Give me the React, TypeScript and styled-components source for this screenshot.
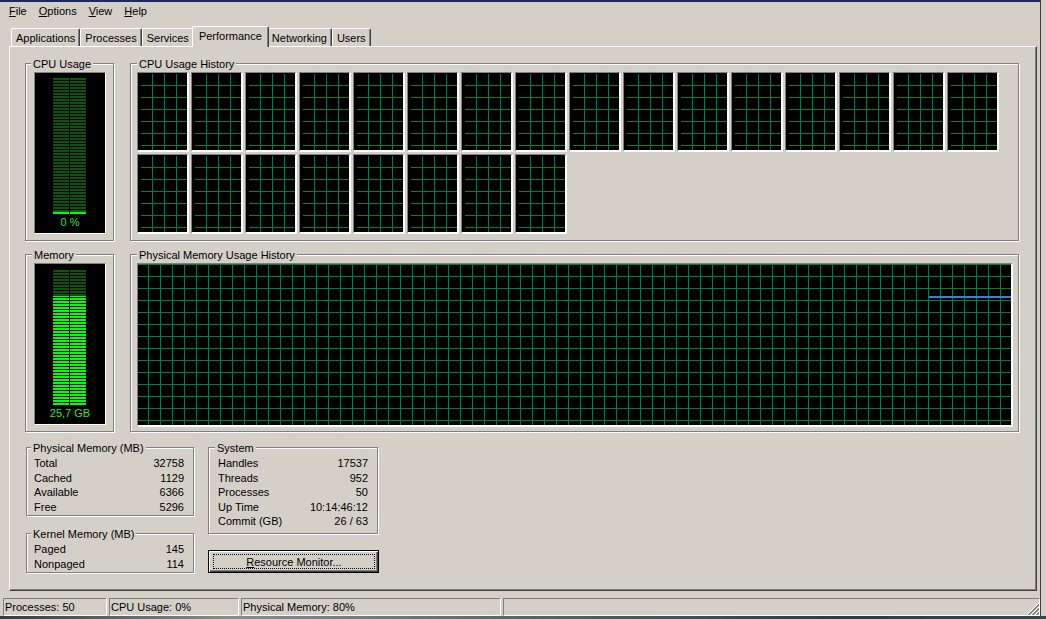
import React from "react";
import styled, {createGlobalStyle} from "styled-components";

const GlobalStyle = createGlobalStyle`
    html, body {
        margin: 0;
        padding: 0;
    }
    body {
        background: #d4d0c8;
        color: #000;
        font-family: "Liberation Sans", Arial, sans-serif;
        font-size: 11px;
        overflow: hidden;
    }
`;

const Screen = styled.div`
    display: flex;
    flex-direction: column;
    height: 619px;
    width: 1046px;
`;

const Window = styled.div`
    background: #d4d0c8;
    border-right: 1px solid #404040;
    box-sizing: border-box;
    display: flex;
    flex-direction: column;
    height: 616px;
    width: 1041px;
`;

const BottomEdge = styled.div`
    background: linear-gradient(90deg, #3a3a3a 0%, #8c8c8c 22%, #5a6464 50%, #2e3c3e 80%, #3a4446 100%);
    height: 3px;
`;

const TitleEdge = styled.div`
    background: #1b2a5e;
    height: 2px;
`;

const MenuBar = styled.div`
    align-items: center;
    display: flex;
    height: 18px;
    padding-left: 3px;
`;

const MenuItem = styled.span`
    line-height: 18px;
    padding: 0 6px;
`;

const TabStrip = styled.div`
    align-items: flex-end;
    display: flex;
    height: 26px;
    padding-left: 11px;
`;

const Tab = styled.div<{$active?: boolean}>`
    background: #d4d0c8;
    border: 1px solid #fff;
    border-bottom: none;
    border-radius: 2px 2px 0 0;
    border-right-color: #404040;
    box-shadow: inset -1px 0 0 #808080;
    box-sizing: border-box;
    height: ${(p) => (p.$active ? 21 : 18)}px;
    line-height: ${(p) => (p.$active ? 19 : 18)}px;
    margin: 0 ${(p) => (p.$active ? -2 : 0)}px ${(p) => (p.$active ? -1 : 0)}px;
    padding: 0 ${(p) => (p.$active ? 6 : 4)}px;
    position: relative;
    white-space: nowrap;
    z-index: ${(p) => (p.$active ? 1 : 0)};
`;

const Panel = styled.div`
    border: 1px solid #fff;
    border-bottom-color: #404040;
    border-right-color: #404040;
    box-shadow: inset -1px -1px 0 #808080;
    box-sizing: border-box;
    display: flex;
    flex-direction: column;
    height: 545px;
    margin-left: 9px;
    padding: 16px 17px 0 15px;
    width: 1028px;
`;

const Row = styled.div<{$top?: number}>`
    display: flex;
    gap: 16px;
    margin-top: ${(p) => p.$top || 0}px;
`;

const Group = styled.div<{$w?: number; $h: number; $pad: string; $top?: number}>`
    border: 1px solid #808080;
    box-shadow: inset 1px 1px 0 #fff, 1px 1px 0 #fff;
    box-sizing: border-box;
    ${(p) => (p.$w ? `width: ${p.$w}px;` : "flex: 1;")}
    display: flex;
    flex-direction: column;
    height: ${(p) => p.$h}px;
    margin-top: ${(p) => p.$top || 0}px;
    padding: ${(p) => p.$pad};
    position: relative;
`;

const Caption = styled.span<{$x: number}>`
    background: #d4d0c8;
    left: ${(p) => p.$x - 3}px;
    line-height: 14px;
    padding: 0 2px;
    position: absolute;
    top: -7px;
    white-space: nowrap;
`;

const Gauge = styled.div`
    align-items: center;
    background: #000;
    border: 1px solid;
    border-color: #808080 #fff #fff #808080;
    box-sizing: border-box;
    display: flex;
    flex-direction: column;
    height: 162px;
    padding-top: 5px;
    width: 72px;
`;

const Bars = styled.div`
    align-self: flex-start;
    display: flex;
    gap: 1px;
    margin-left: 18px;
`;

const BarColumn = styled.div`
    display: flex;
    flex-direction: column;
    height: 136px;
    width: 16px;
`;

const Unlit = styled.div`
    background: repeating-linear-gradient(to top, #0f520f 0 2px, #000 2px 3px);
    flex: 1;
`;

const Lit = styled.div`
    background: repeating-linear-gradient(to top, #00ff00 0 2px, #000 2px 3px);
`;

const GaugeLabel = styled.div`
    color: #33e633;
    line-height: 14px;
    margin-top: 1px;
    white-space: nowrap;
`;

const CpuGrid = styled.div`
    display: grid;
    gap: 2px;
    grid-template-columns: repeat(16, 52px);
`;

const CpuGraph = styled.div`
    background-clip: content-box, content-box, padding-box;
    background-image: linear-gradient(to right, transparent 11px, #008040 11px),
        linear-gradient(to bottom, transparent 11px, #008040 11px), linear-gradient(#000, #000);
    background-origin: content-box, content-box, padding-box;
    background-size: 12px 12px, 12px 12px, auto;
    border-color: #808080 #fff #fff #808080;
    border-style: solid;
    border-width: 1px 2px 2px 1px;
    box-sizing: border-box;
    height: 80px;
    padding: 1px 0 0 3px;
    width: 52px;
`;

const MemoryGraph = styled.div`
    background-color: #000;
    background-image: linear-gradient(to right, transparent 10px, #008040 10px 11px, transparent 11px),
        linear-gradient(to bottom, #008040 1px, transparent 1px);
    background-size: 12px 12px;
    border-color: #808080 #fff #fff #808080;
    border-style: solid;
    border-width: 1px 2px 2px 1px;
    box-sizing: border-box;
    height: 164px;
    position: relative;
    width: 876px;
`;

const HistoryLine = styled.svg`
    display: block;
    left: 0;
    position: absolute;
    top: 0;
`;

const Column = styled.div<{$w: number; $left?: number}>`
    display: flex;
    flex-direction: column;
    margin-left: ${(p) => p.$left || 0}px;
    width: ${(p) => p.$w}px;
`;

const StatRow = styled.div`
    display: flex;
    justify-content: space-between;
    line-height: 14.6px;
    white-space: nowrap;
`;

const Button = styled.button`
    background: #d4d0c8;
    border: 1px solid #000;
    box-shadow: inset 1px 1px 0 #fff, inset -1px -1px 0 #404040, inset -2px -2px 0 #808080;
    box-sizing: border-box;
    color: #000;
    display: flex;
    font: inherit;
    height: 23px;
    margin-top: 16px;
    padding: 0;
    width: 171px;
`;

const FocusRing = styled.span`
    align-items: center;
    border: 1px dotted #000;
    display: flex;
    flex: 1;
    justify-content: center;
    margin: 3px 3px 3px 4px;
`;

const StatusBar = styled.div`
    display: flex;
    gap: 2px;
    height: 18px;
    margin-top: 7px;
    padding-left: 3px;
`;

const Pane = styled.div<{$w?: number}>`
    align-items: center;
    border: 1px solid;
    border-color: #808080 #fff #fff #808080;
    box-sizing: border-box;
    display: flex;
    ${(p) => (p.$w ? `width: ${p.$w}px;` : "flex: 1;")}
    justify-content: space-between;
    padding-left: 1px;
    white-space: nowrap;
`;

const Grip = styled.svg`
    align-self: flex-end;
    display: block;
`;

type Stat = [string, string];

const physical: Stat[] = [
    ["Total", "32758"],
    ["Cached", "1129"],
    ["Available", "6366"],
    ["Free", "5296"],
];

const kernel: Stat[] = [
    ["Paged", "145"],
    ["Nonpaged", "114"],
];

const system: Stat[] = [
    ["Handles", "17537"],
    ["Threads", "952"],
    ["Processes", "50"],
    ["Up Time", "10:14:46:12"],
    ["Commit (GB)", "26 / 63"],
];

const tabs = ["Applications", "Processes", "Services", "Performance", "Networking", "Users"];

const menus = ["File", "Options", "View", "Help"];

const MeterBars: React.FunctionComponent<{value: number}> = ({value}) => {
    const lit = Math.max(2, Math.round(value * 136));
    return (
        <Bars>
            {[0, 1].map((i) => (
                <BarColumn key={i}>
                    <Unlit />
                    <Lit style={{height: lit}} />
                </BarColumn>
            ))}
        </Bars>
    );
};

const Stats: React.FunctionComponent<{rows: Stat[]}> = ({rows}) => (
    <>
        {rows.map(([label, value]) => (
            <StatRow key={label}>
                <span>{label}</span>
                <span>{value}</span>
            </StatRow>
        ))}
    </>
);

export default function App() {
    const memoryUse = 0.8;
    const lineY = Math.round(161 * (1 - memoryUse)) + 1;

    return (
        <Screen>
            <GlobalStyle />
            <Window>
                <TitleEdge />
                <MenuBar>
                    {menus.map((m) => (
                        <MenuItem key={m}>
                            <u>{m[0]}</u>
                            {m.slice(1)}
                        </MenuItem>
                    ))}
                </MenuBar>
                <TabStrip>
                    {tabs.map((t) => (
                        <Tab key={t} $active={t === "Performance"}>
                            {t}
                        </Tab>
                    ))}
                </TabStrip>
                <Panel>
                    <Row>
                        <Group $w={89} $h={178} $pad="8px 0 0 8px">
                            <Caption $x={8}>CPU Usage</Caption>
                            <Gauge>
                                <MeterBars value={0} />
                                <GaugeLabel>0 %</GaugeLabel>
                            </Gauge>
                        </Group>
                        <Group $h={178} $pad="8px 0 0 6px">
                            <Caption $x={9}>CPU Usage History</Caption>
                            <CpuGrid>
                                {Array.from({length: 24}, (_, i) => (
                                    <CpuGraph key={i} />
                                ))}
                            </CpuGrid>
                        </Group>
                    </Row>
                    <Row $top={13}>
                        <Group $w={89} $h={178} $pad="8px 0 0 8px">
                            <Caption $x={9}>Memory</Caption>
                            <Gauge>
                                <MeterBars value={memoryUse} />
                                <GaugeLabel>25,7 GB</GaugeLabel>
                            </Gauge>
                        </Group>
                        <Group $h={178} $pad="8px 0 0 6px">
                            <Caption $x={9}>Physical Memory Usage History</Caption>
                            <MemoryGraph>
                                <HistoryLine width={873} height={161}>
                                    <line x1={791} y1={lineY} x2={873} y2={lineY} stroke="#3d7fe0" strokeWidth={2} />
                                </HistoryLine>
                            </MemoryGraph>
                        </Group>
                    </Row>
                    <Row $top={15}>
                        <Column $w={168} $left={1}>
                            <Group $w={168} $h={69} $pad="8px 9px 0 7px">
                                <Caption $x={7}>Physical Memory (MB)</Caption>
                                <Stats rows={physical} />
                            </Group>
                            <Group $w={168} $h={40} $pad="8px 9px 0 7px" $top={17}>
                                <Caption $x={7}>Kernel Memory (MB)</Caption>
                                <Stats rows={kernel} />
                            </Group>
                        </Column>
                        <Column $w={171} $left={-2}>
                            <Group $w={170} $h={87} $pad="8px 9px 0 9px">
                                <Caption $x={9}>System</Caption>
                                <Stats rows={system} />
                            </Group>
                            <Button>
                                <FocusRing>
                                    <u>R</u>esource Monitor...
                                </FocusRing>
                            </Button>
                        </Column>
                    </Row>
                </Panel>
                <StatusBar>
                    <Pane $w={104}>Processes: 50</Pane>
                    <Pane $w={130}>CPU Usage: 0%</Pane>
                    <Pane $w={260}>Physical Memory: 80%</Pane>
                    <Pane>
                        <span />
                        <Grip width={12} height={12} viewBox="0 0 12 12">
                            {[0, 4, 8].map((o) => (
                                <g key={o}>
                                    <line x1={12} y1={o} x2={o} y2={12} stroke="#fff" />
                                    <line x1={12} y1={o + 1} x2={o + 1} y2={12} stroke="#808080" />
                                    <line x1={12} y1={o + 2} x2={o + 2} y2={12} stroke="#808080" />
                                </g>
                            ))}
                        </Grip>
                    </Pane>
                </StatusBar>
            </Window>
            <BottomEdge />
        </Screen>
    );
}
